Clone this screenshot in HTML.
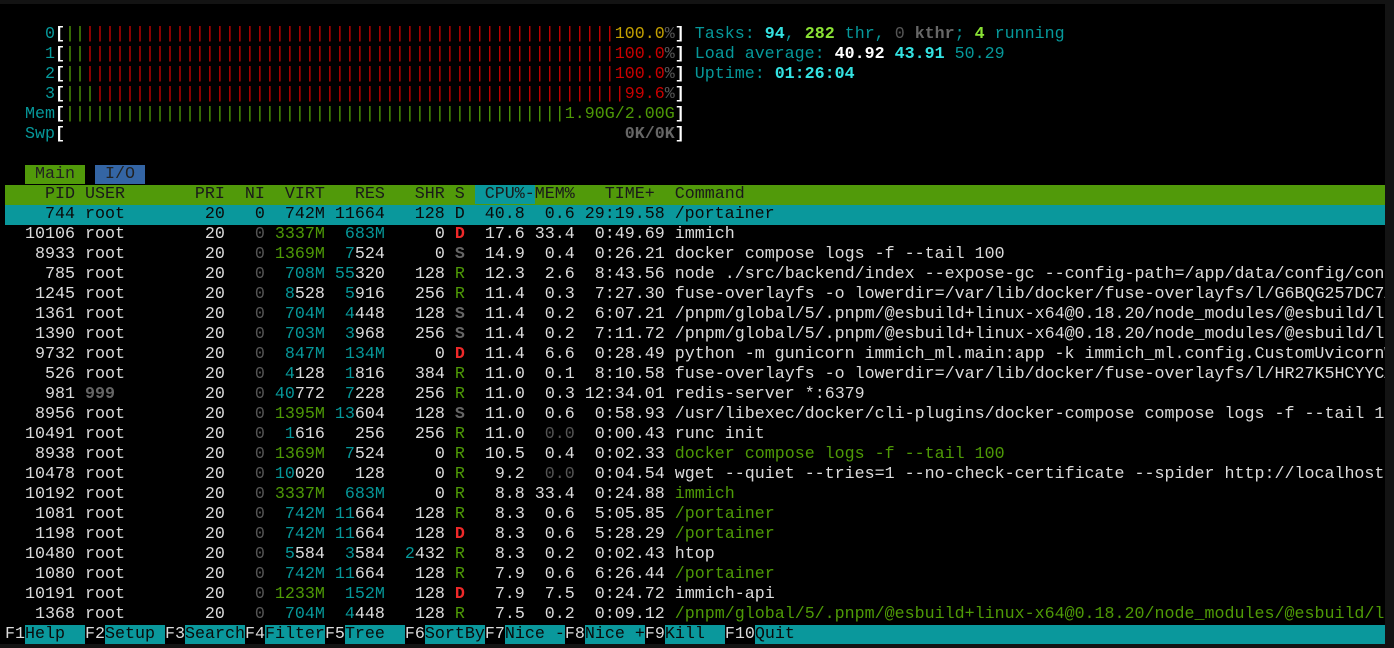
<!DOCTYPE html>
<html><head><meta charset="utf-8"><style>
html,body{margin:0;padding:0;background:#131313;width:1394px;height:648px;overflow:hidden}
#t{position:absolute;left:0;top:4px;width:1385px;height:640px;background:#000;overflow:hidden}
pre{margin:0;padding:1px 0 0 5px;font-family:"Liberation Mono",monospace;font-size:16.67px;line-height:20px;color:#dcdcdc;white-space:pre}
.c{color:#06989a}.g{color:#4e9a06}.r{color:#cc0000}.y{color:#c4a000}.k{color:#555}
.W{color:#fff;font-weight:bold}.B{color:#34e2e2;font-weight:bold}.G{color:#8ae234;font-weight:bold}
.R{color:#ef2929;font-weight:bold}.S{color:#666;font-weight:bold}.K{color:#666;font-weight:bold}
.row{display:block;width:1380px}
.hd{background:#519a0a;color:#1a1a1a}
.so{background:#0a989c}
.sel{background:#0a989c;color:#0a0a0a}
.tm{background:#519a0a;color:#222}.ti{background:#3465a4;color:#222}
.fk{background:#0a989c;color:#0a0a0a}
</style></head><body><div id="t"><pre>

    <span class="c">0</span><span class="W">[</span><span class="g">||</span><span class="r">|||||||||||||||||||||||||||||||||||||||||||||||||||||</span><span class="y">100.0</span><span class="k">%</span><span class="W">]</span> <span class="c">Tasks: </span><span class="B">94</span><span class="c">, </span><span class="G">282</span><span class="c"> thr, </span><span class="k">0 </span><span class="K">kthr</span><span class="c">; </span><span class="G">4</span><span class="c"> running</span>
    <span class="c">1</span><span class="W">[</span><span class="g">||</span><span class="r">|||||||||||||||||||||||||||||||||||||||||||||||||||||100.0</span><span class="k">%</span><span class="W">]</span> <span class="c">Load average: </span><span class="W">40.92 </span><span class="B">43.91 </span><span class="c">50.29</span>
    <span class="c">2</span><span class="W">[</span><span class="g">||</span><span class="r">|||||||||||||||||||||||||||||||||||||||||||||||||||||100.0</span><span class="k">%</span><span class="W">]</span> <span class="c">Uptime: </span><span class="B">01:26:04</span>
    <span class="c">3</span><span class="W">[</span><span class="g">|||</span><span class="r">|||||||||||||||||||||||||||||||||||||||||||||||||||||99.6</span><span class="k">%</span><span class="W">]</span>
  <span class="c">Mem</span><span class="W">[</span><span class="g">||||||||||||||||||||||||||||||||||||||||||||||||||1.90G/2.00G</span><span class="W">]</span>
  <span class="c">Swp</span><span class="W">[</span>                                                        <span class="K">0K/0K</span><span class="W">]</span>

  <span class="tm"> Main </span> <span class="ti"> I/O </span>
<span class="row hd">    PID USER       PRI  NI  VIRT   RES   SHR S <span class="so"> CPU%-</span>MEM%   TIME+  Command</span><span class="row sel">    744 root        20   0  742M 11664   128 D  40.8  0.6 29:19.58 /portainer</span>  10106 root        20   <span class="k">0</span> <span class="g">3337M</span>  <span class="c">683M</span>     0 <span class="R">D</span>  17.6 33.4  0:49.69 immich
   8933 root        20   <span class="k">0</span> <span class="g">1369M</span>  <span class="c">7</span>524     0 <span class="S">S</span>  14.9  0.4  0:26.21 docker compose logs -f --tail 100
    785 root        20   <span class="k">0</span>  <span class="c">708M</span> <span class="c">55</span>320   128 <span class="g">R</span>  12.3  2.6  8:43.56 node ./src/backend/index --expose-gc --config-path=/app/data/config/config.json
   1245 root        20   <span class="k">0</span>  <span class="c">8</span>528  <span class="c">5</span>916   256 <span class="g">R</span>  11.4  0.3  7:27.30 fuse-overlayfs -o lowerdir=/var/lib/docker/fuse-overlayfs/l/G6BQG257DC7ABC
   1361 root        20   <span class="k">0</span>  <span class="c">704M</span>  <span class="c">4</span>448   128 <span class="S">S</span>  11.4  0.2  6:07.21 /pnpm/global/5/.pnpm/@esbuild+linux-x64@0.18.20/node_modules/@esbuild/linux-x64
   1390 root        20   <span class="k">0</span>  <span class="c">703M</span>  <span class="c">3</span>968   256 <span class="S">S</span>  11.4  0.2  7:11.72 /pnpm/global/5/.pnpm/@esbuild+linux-x64@0.18.20/node_modules/@esbuild/linux-x64
   9732 root        20   <span class="k">0</span>  <span class="c">847M</span>  <span class="c">134M</span>     0 <span class="R">D</span>  11.4  6.6  0:28.49 python -m gunicorn immich_ml.main:app -k immich_ml.config.CustomUvicornWorker
    526 root        20   <span class="k">0</span>  <span class="c">4</span>128  <span class="c">1</span>816   384 <span class="g">R</span>  11.0  0.1  8:10.58 fuse-overlayfs -o lowerdir=/var/lib/docker/fuse-overlayfs/l/HR27K5HCYYCABC
    981 <span class="K">999</span>         20   <span class="k">0</span> <span class="c">40</span>772  <span class="c">7</span>228   256 <span class="g">R</span>  11.0  0.3 12:34.01 redis-server *:6379
   8956 root        20   <span class="k">0</span> <span class="g">1395M</span> <span class="c">13</span>604   128 <span class="S">S</span>  11.0  0.6  0:58.93 /usr/libexec/docker/cli-plugins/docker-compose compose logs -f --tail 100
  10491 root        20   <span class="k">0</span>  <span class="c">1</span>616   256   256 <span class="g">R</span>  11.0  <span class="k">0.0</span>  0:00.43 runc init
   8938 root        20   <span class="k">0</span> <span class="g">1369M</span>  <span class="c">7</span>524     0 <span class="g">R</span>  10.5  0.4  0:02.33 <span class="g">docker compose logs -f --tail 100</span>
  10478 root        20   <span class="k">0</span> <span class="c">10</span>020   128     0 <span class="g">R</span>   9.2  <span class="k">0.0</span>  0:04.54 wget --quiet --tries=1 --no-check-certificate --spider http://localhost:2283/api
  10192 root        20   <span class="k">0</span> <span class="g">3337M</span>  <span class="c">683M</span>     0 <span class="g">R</span>   8.8 33.4  0:24.88 <span class="g">immich</span>
   1081 root        20   <span class="k">0</span>  <span class="c">742M</span> <span class="c">11</span>664   128 <span class="g">R</span>   8.3  0.6  5:05.85 <span class="g">/portainer</span>
   1198 root        20   <span class="k">0</span>  <span class="c">742M</span> <span class="c">11</span>664   128 <span class="R">D</span>   8.3  0.6  5:28.29 <span class="g">/portainer</span>
  10480 root        20   <span class="k">0</span>  <span class="c">5</span>584  <span class="c">3</span>584  <span class="c">2</span>432 <span class="g">R</span>   8.3  0.2  0:02.43 htop
   1080 root        20   <span class="k">0</span>  <span class="c">742M</span> <span class="c">11</span>664   128 <span class="g">R</span>   7.9  0.6  6:26.44 <span class="g">/portainer</span>
  10191 root        20   <span class="k">0</span> <span class="g">1233M</span>  <span class="c">152M</span>   128 <span class="R">D</span>   7.9  7.5  0:24.72 immich-api
   1368 root        20   <span class="k">0</span>  <span class="c">704M</span>  <span class="c">4</span>448   128 <span class="g">R</span>   7.5  0.2  0:09.12 <span class="g">/pnpm/global/5/.pnpm/@esbuild+linux-x64@0.18.20/node_modules/@esbuild/linux-x64</span>
F1<span class="fk">Help  </span>F2<span class="fk">Setup </span>F3<span class="fk">Search</span>F4<span class="fk">Filter</span>F5<span class="fk">Tree  </span>F6<span class="fk">SortBy</span>F7<span class="fk">Nice -</span>F8<span class="fk">Nice +</span>F9<span class="fk">Kill  </span>F10<span class="fk">Quit                                                                </span></pre></div></body></html>
